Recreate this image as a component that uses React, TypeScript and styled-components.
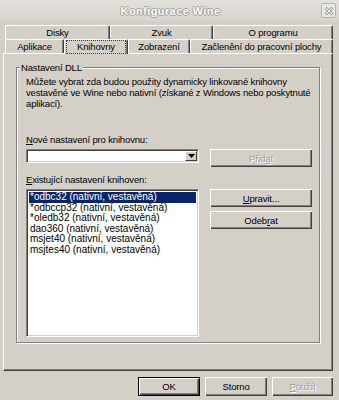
import styled, { createGlobalStyle } from "styled-components";

// okno "Konfigurace Wine" – karta Knihovny
const GlobalStyle = createGlobalStyle`
  html, body {
    margin: 0;
    padding: 0;
    background: #d4d0c8;
  }
  body {
    font-family: "Liberation Sans", Arial, sans-serif;
    font-size: 9.5px;
    letter-spacing: -0.15px;
    color: #000;
  }
  * {
    box-sizing: border-box;
  }
`;

const topTabs = [
    { label: 'Disky', w: 105 },
    { label: 'Zvuk', w: 103 },
    { label: 'O programu', w: 120 },
];

const bottomTabs = [
    { label: 'Aplikace', w: 59 },
    { label: 'Knihovny', w: 64, active: true },
    { label: 'Zobrazení', w: 62 },
    { label: 'Začlenění do pracovní plochy', w: 143 },
];

const dlls = [
    '*odbc32 (nativní, vestavěná)',
    '*odbccp32 (nativní, vestavěná)',
    '*oledb32 (nativní, vestavěná)',
    'dao360 (nativní, vestavěná)',
    'msjet40 (nativní, vestavěná)',
    'msjtes40 (nativní, vestavěná)',
];

const App = () => {
    return (
        <>
            <GlobalStyle />
            <Window>
                <TitleBar>
                    <Title>Konfigurace Wine</Title>
                    <CloseBox>
                        <svg width="10" height="10" viewBox="0 0 10 10">
                            <path d="M1.5 1.5 L8.5 8.5 M8.5 1.5 L1.5 8.5" stroke="#a9a7a1" strokeWidth="3" />
                            <path d="M1.5 1.5 L8.5 8.5 M8.5 1.5 L1.5 8.5" stroke="#f4f3f0" strokeWidth="1" />
                        </svg>
                    </CloseBox>
                </TitleBar>

                <TabArea>
                    <TabRow>
                        {topTabs.map((t) => (
                            <Tab key={t.label} $w={t.w}>{t.label}</Tab>
                        ))}
                    </TabRow>
                    <TabRow>
                        {bottomTabs.map((t) => (
                            <Tab key={t.label} $w={t.w} $active={t.active}>
                                {t.active ? <Focus>{t.label}</Focus> : t.label}
                            </Tab>
                        ))}
                    </TabRow>
                </TabArea>

                <Panel>
                    <Group>
                        <Legend>Nastavení DLL</Legend>
                        <Description>
                            Můžete vybrat zda budou použity dynamicky linkované knihovny<br />
                            vestavěné ve Wine nebo nativní (získané z Windows nebo poskytnuté<br />
                            aplikací).
                        </Description>

                        <FieldLabel $top={25}><u>N</u>ové nastavení pro knihovnu:</FieldLabel>
                        <Row>
                            <Combo>
                                <ComboField />
                                <ComboArrow>
                                    <svg width="7" height="4" viewBox="0 0 7 4">
                                        <path d="M0 0 H7 L3.5 4 Z" fill="#000" />
                                    </svg>
                                </ComboArrow>
                            </Combo>
                            <Button $w={102} $disabled>Přid<u>a</u>t</Button>
                        </Row>

                        <FieldLabel $top={7}><u>E</u>xistující nastavení knihoven:</FieldLabel>
                        <Row>
                            <List>
                                {dlls.map((d, i) => (
                                    <ListItem key={d} $selected={i === 0}>{d}</ListItem>
                                ))}
                            </List>
                            <ButtonColumn>
                                <Button $w={102}><u>U</u>pravit...</Button>
                                <Button $w={102}>Odeb<u>r</u>at</Button>
                            </ButtonColumn>
                        </Row>
                    </Group>
                </Panel>

                <Footer>
                    <Button $w={62} $h={19} $default>OK</Button>
                    <Button $w={62} $h={19}>Storno</Button>
                    <Button $w={61} $h={19} $disabled><u>P</u>oužít</Button>
                </Footer>
            </Window>
        </>
    );
};

const Window = styled.div`
    width: 339px;
    height: 400px;
    background: #d4d0c8;
    display: flex;
    flex-direction: column;
    overflow: hidden;
`;

const TitleBar = styled.div`
    height: 21px;
    display: flex;
    align-items: center;
    padding: 0 3px 0 20px;
    background: linear-gradient(#e3e1db, #d8d5cf);
`;

const Title = styled.div`
    flex: 1;
    text-align: center;
    font-weight: bold;
    font-size: 11px;
    letter-spacing: 0.4px;
    color: #fbfaf8;
    text-shadow: -1px 0 #a6a39d, 1px 0 #a6a39d, 0 -1px #a6a39d, 0 1px #a6a39d;
`;

const CloseBox = styled.div`
    width: 15px;
    height: 15px;
    border: 1px solid #b3b1ab;
    border-radius: 2px;
    background: #e9e7e2;
    display: flex;
    align-items: center;
    justify-content: center;
`;

const TabArea = styled.div`
    display: flex;
    flex-direction: column;
    padding: 4px 6px 0 5px;
`;

const TabRow = styled.div`
    display: flex;
    height: 14px;
`;

const Tab = styled.div<{ $w: number; $active?: boolean }>`
    width: ${({ $w }) => $w}px;
    height: ${({ $active }) => ($active ? '15px' : '14px')};
    position: relative;
    z-index: ${({ $active }) => ($active ? 2 : 0)};
    display: flex;
    align-items: center;
    justify-content: center;
    background: #d4d0c8;
    border-top: 1px solid #fff;
    border-left: 1px solid #fff;
    border-right: 1px solid #404040;
    border-radius: 2px 2px 0 0;
    box-shadow: inset -1px 0 #808080;
    line-height: 12px;
    white-space: nowrap;
`;

const Focus = styled.span`
    display: flex;
    align-items: center;
    justify-content: center;
    width: calc(100% - 4px);
    height: 12px;
    outline: 1px dotted #404040;
`;

const Panel = styled.div`
    height: 318px;
    margin: 0 6px 0 3px;
    padding: 8px 12px 0 12px;
    border-top: 1px solid #fff;
    border-left: 1px solid #fff;
    border-right: 1px solid #404040;
    border-bottom: 1px solid #404040;
    box-shadow: inset -1px -1px #808080;
`;

const Group = styled.fieldset`
    height: 281px;
    margin: 0;
    padding: 0 6px 0 9px;
    border: 1px solid #808080;
    box-shadow: inset 1px 1px #fff, 1px 1px #fff;
    display: flex;
    flex-direction: column;
`;

const Legend = styled.legend`
    margin-left: -6px;
    padding: 0 1px;
    line-height: 11px;
    background: #d4d0c8;
`;

const Description = styled.p`
    margin: 3px 0 0;
    line-height: 11px;
    white-space: nowrap;
`;

const FieldLabel = styled.div<{ $top: number }>`
    margin-top: ${({ $top }) => $top}px;
    line-height: 11px;
`;

const Row = styled.div`
    display: flex;
    gap: 11px;
    margin-top: 4px;
`;

const Combo = styled.div`
    width: 173px;
    height: 14px;
    display: flex;
    background: #fff;
    padding: 2px;
    border-top: 1px solid #808080;
    border-left: 1px solid #808080;
    border-right: 1px solid #fff;
    border-bottom: 1px solid #fff;
    box-shadow: inset 1px 1px #404040, inset -1px -1px #d4d0c8;
`;

const ComboField = styled.div`
    flex: 1;
`;

const ComboArrow = styled.div`
    width: 12px;
    margin: -1px -1px -1px 0;
    display: flex;
    align-items: center;
    justify-content: center;
    background: #d4d0c8;
    border-top: 1px solid #fff;
    border-left: 1px solid #fff;
    border-right: 1px solid #404040;
    border-bottom: 1px solid #404040;
`;

const Button = styled.div<{ $w: number; $h?: number; $disabled?: boolean; $default?: boolean }>`
    width: ${({ $w }) => $w}px;
    height: ${({ $h }) => $h ?? 18}px;
    display: flex;
    align-items: center;
    justify-content: center;
    background: #d4d0c8;
    border: ${({ $default }) => ($default ? '1px solid #000' : 'none')};
    box-shadow: inset 1px 1px #fff, inset -1px -1px #404040, inset -2px -2px #808080;
    color: ${({ $disabled }) => ($disabled ? '#a09d96' : '#000')};
    text-shadow: ${({ $disabled }) => ($disabled ? '1px 1px #fff' : 'none')};
`;

const List = styled.div`
    width: 173px;
    height: 148px;
    background: #fff;
    padding: 2px;
    border-top: 1px solid #808080;
    border-left: 1px solid #808080;
    border-right: 1px solid #fff;
    border-bottom: 1px solid #fff;
    box-shadow: inset 1px 1px #404040, inset -1px -1px #d4d0c8;
`;

const ListItem = styled.div<{ $selected?: boolean }>`
    height: 10.5px;
    line-height: 10.5px;
    padding-left: 1px;
    font-size: 10px;
    letter-spacing: 0;
    white-space: nowrap;
    background: ${({ $selected }) => ($selected ? '#0a246a' : 'transparent')};
    color: ${({ $selected }) => ($selected ? '#fff' : '#000')};
`;

const ButtonColumn = styled.div`
    display: flex;
    flex-direction: column;
    gap: 4px;
`;

const Footer = styled.div`
    display: flex;
    justify-content: flex-end;
    gap: 5px;
    padding: 6px 6px 0 0;
`;

export default App;
